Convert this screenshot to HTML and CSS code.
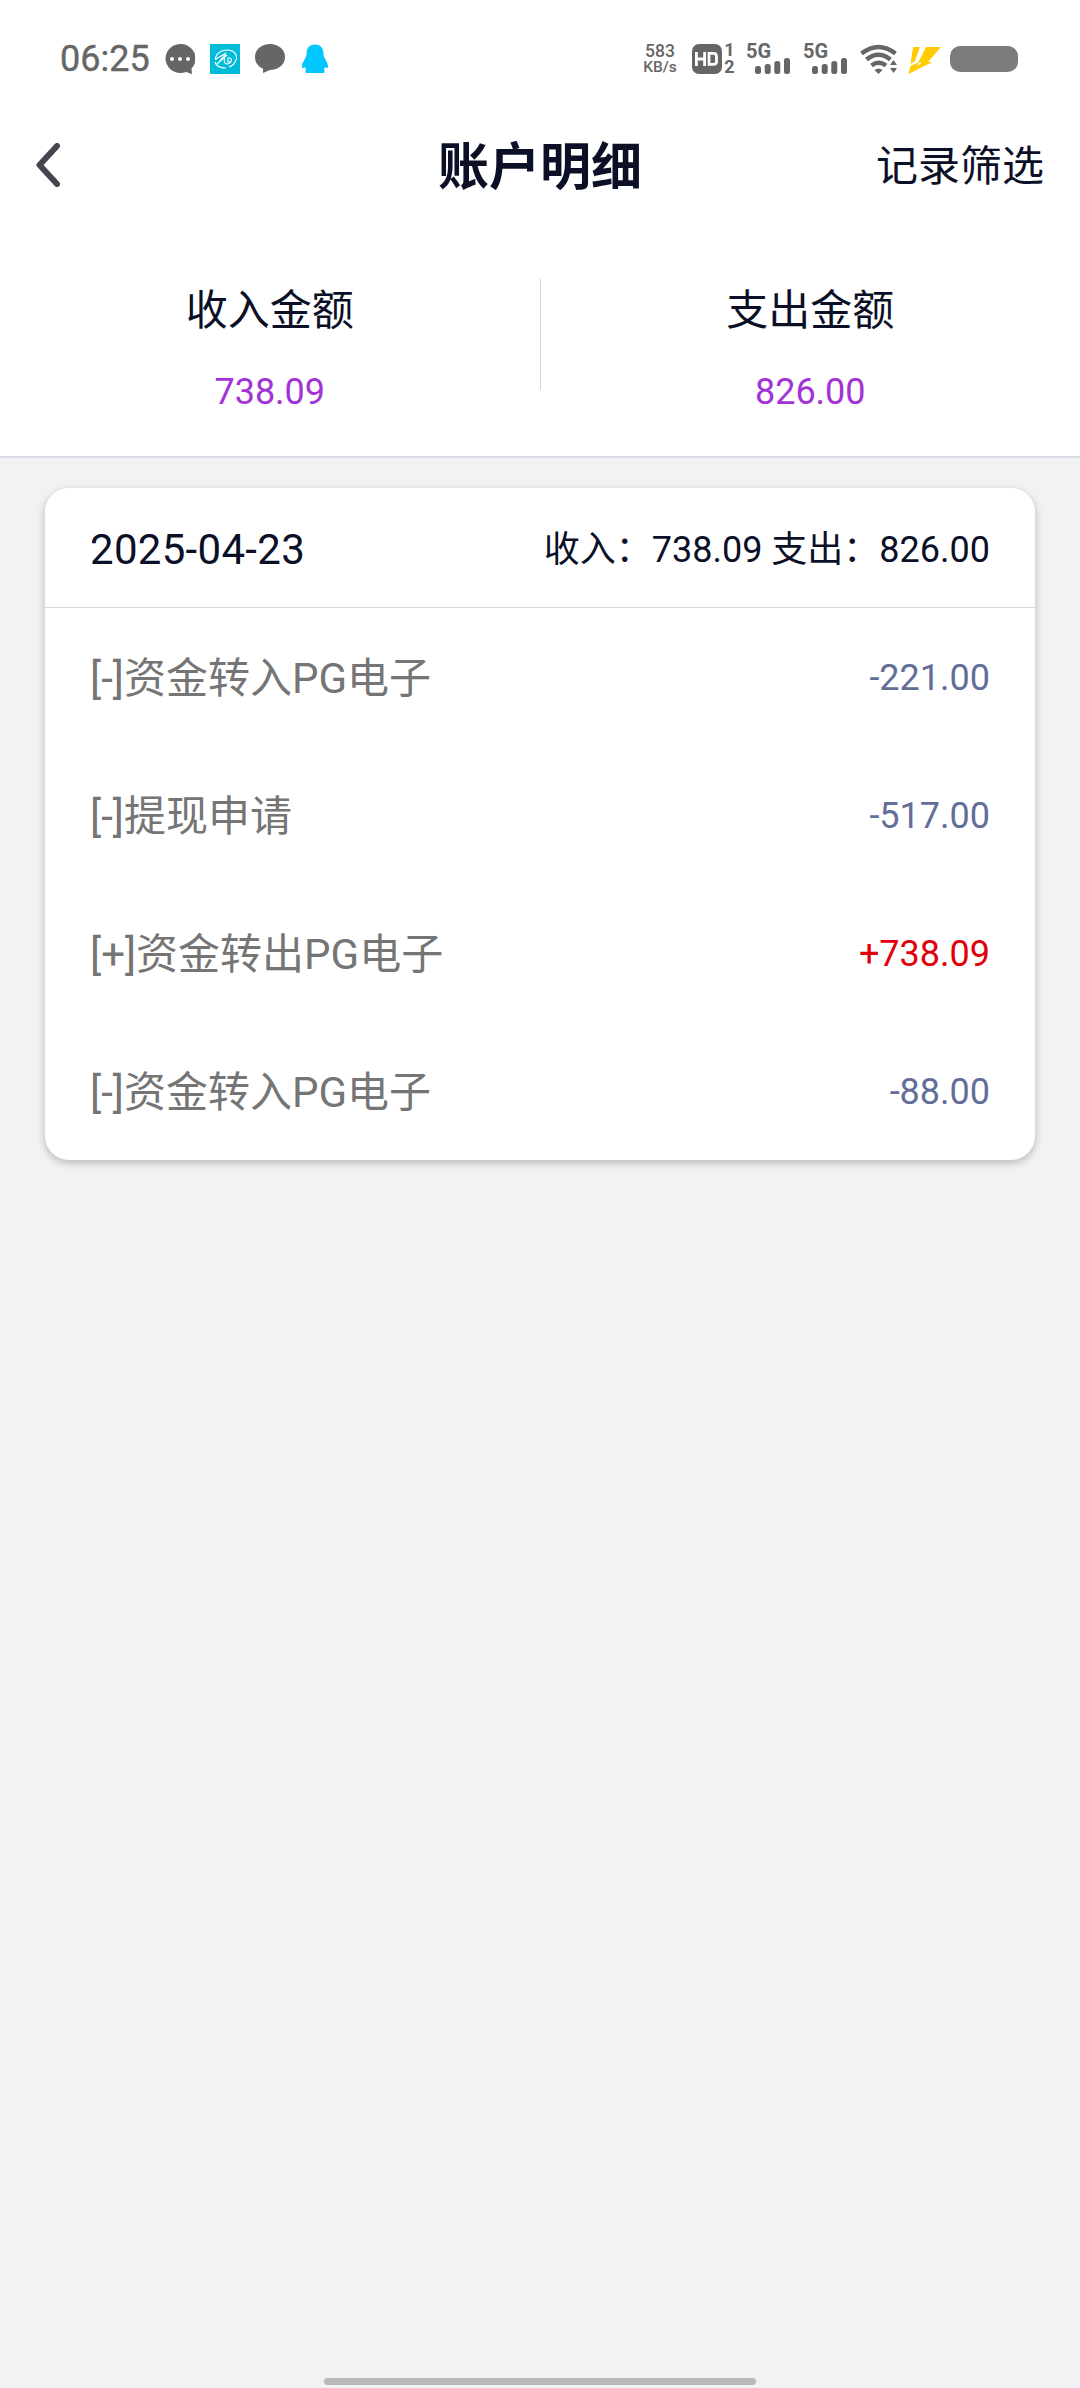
FILE: index.html
```html
<!DOCTYPE html>
<html lang="zh-CN">
<head>
<meta charset="utf-8">
<title>账户明细</title>
<link rel="stylesheet" href="styles.css">
</head>
<body>
<div class="screen">
  <div class="top">
    <div class="status">
      <div class="status-left">
        <span class="time">06:25</span>
        <svg width="30" height="30" viewBox="0 0 30 30"><path fill="#666" d="M15 0a15 14.500 0 0 1 11.500 24.500L27 30l-6-2A15 14.500 0 1 1 15 0z"/><g fill="#fff"><circle cx="7" cy="15" r="2"/><circle cx="15" cy="15" r="2"/><circle cx="23" cy="15" r="2"/></g></svg>
        <svg width="30" height="30" viewBox="0 0 30 30"><path fill="#00bcd9" d="M0 0h30v30H0z"/><g fill="none" stroke="#fff" stroke-width="1.100"><path d="M5.500 16C5 10 11 6 17 6c7 0 11 5 9 10-1 3-4 6-7 7M6 15l10-6-7 9M7 20l10-9M5 18c1 4 5 6 11 6"/><path d="M16 11c-3 4-2 9 1 9 4 0 6-5 3-6h-2v4h3"/></g></svg>
        <svg width="30" height="30" viewBox="0 0 30 30"><path fill="#666" d="M15 0c8.500 0 15 5.500 15 13S23.500 26 15 26l-7 3V24.500C3 22.500 0 18.500 0 13 0 5.500 6.500 0 15 0z"/></svg>
        <svg width="30" height="30" viewBox="0 0 30 30"><path fill="#00c8ff" d="M15 .5c6 0 8.500 4 8.500 9.500 0 4 4.500 8 4.500 12 0 2-1 3-3 1l-1 3c1 1 1 3-1 3H7c-2 0-2-2-1-3l-1-3c-2 2-3 1-3-1 0-4 4.500-8 4.500-12C6.500 4.500 9 .5 15 .5z"/></svg>
      </div>
      <div class="status-right">
        <div class="speed"><span>583</span><span>KB/s</span></div>
        <div class="hd">
          <svg width="30" height="30" viewBox="0 0 30 30"><rect width="30" height="30" rx="7" fill="#666"/><path fill="none" stroke="#fff" stroke-width="2.800" d="M4.400 8v14M12.600 8v14M4.400 15h8.200M17 9.400h4.500q3 0 3 3v5q0 3-3 3H17z"/></svg>
          <div class="sims"><span>1</span><span>2</span></div>
        </div>
        <div class="signal"><span>5G</span><svg width="35" height="16" viewBox="0 0 35 16"><g fill="#666"><rect y="8" width="6" height="8" rx="2.500"/><rect x="9.700" y="6" width="6" height="10" rx="2.500"/><rect x="19.300" y="3" width="6" height="13" rx="2.500"/><rect x="29" width="6" height="16" rx="2.500"/></g></svg></div>
        <div class="signal"><span>5G</span><svg width="35" height="16" viewBox="0 0 35 16"><g fill="#666"><rect y="8" width="6" height="8" rx="2.500"/><rect x="9.700" y="6" width="6" height="10" rx="2.500"/><rect x="19.300" y="3" width="6" height="13" rx="2.500"/><rect x="29" width="6" height="16" rx="2.500"/></g></svg></div>
        <svg class="wifi" width="37" height="30" viewBox="0 0 37 30"><g fill="none" stroke="#666" stroke-width="4.300"><path d="M1.500 9.500Q18.500-3.500 35.500 9.500M6.500 15.500Q18.500 6 30.500 15.500M11.500 21.500Q18.500 16 26 21.500"/></g><path fill="#666" d="M14.500 26q4-3 8 0l-4 4zM33.500 16l3.500 5h-7zM33.500 29l3.500-5h-7z"/></svg>
        <svg class="bolt" width="33" height="27" viewBox="0 0 33 27"><path fill="#fc0" d="M5 0h7L7 14l-4.500 3zM18 0h15L20 15h4.500L.5 27l2-8 9-4-3 4.500 5-3.500-3-1z"/></svg>
        <div class="battery"></div>
      </div>
    </div>
    <div class="nav">
      <svg class="back" width="24" height="44" viewBox="0 0 24 44"><path d="M21 3 3.500 22 21 41" fill="none" stroke="#45454f" stroke-width="6" stroke-linecap="round" stroke-linejoin="round"/></svg>
      <h1>账户明细</h1>
      <span class="filter">记录筛选</span>
    </div>
    <div class="summary">
      <div class="sum"><span class="label">收入金额</span><span class="value">738.09</span></div>
      <div class="divider"></div>
      <div class="sum"><span class="label">支出金额</span><span class="value">826.00</span></div>
    </div>
  </div>
  <div class="card">
    <div class="card-head"><span class="date">2025-04-23</span><span class="totals">收入：738.09 支出：826.00</span></div>
    <div class="row"><span class="name">[-]资金转入PG电子</span><span class="amount">-221.00</span></div>
    <div class="row"><span class="name">[-]提现申请</span><span class="amount">-517.00</span></div>
    <div class="row"><span class="name">[+]资金转出PG电子</span><span class="amount plus">+738.09</span></div>
    <div class="row"><span class="name">[-]资金转入PG电子</span><span class="amount">-88.00</span></div>
  </div>
  <div class="home-bar"></div>
</div>
</body>
</html>
```

FILE: styles.css
```css
* { box-sizing: border-box; margin: 0; }
body { font-family: Roboto, "Noto Sans CJK SC", sans-serif; font-size: 42px; color: #0b1027; background: #f2f2f4; }
svg { display: block; flex: none; }
.screen { width: 1080px; height: 2388px; display: flex; flex-direction: column; overflow: hidden; }
.top { height: 458px; background: #fff; border-bottom: 2px solid #d9dbe7; }
.status { height: 110px; padding: 44px 62px 0 60px; display: flex; justify-content: space-between; color: #666; }
.status-left { display: flex; gap: 15px; height: 30px; align-items: center; }
.time { width: 90px; font-size: 36px; line-height: 30px; -webkit-text-stroke: .4px #666; }
.status-right { display: flex; height: 30px; align-items: flex-start; font-weight: 500; }
.speed { width: 34px; display: flex; flex-direction: column; align-items: center; font-size: 17.5px; line-height: 16px; margin: -1px 15px 0 0; }
.speed span + span { font-size: 15.5px; }
.hd { display: flex; gap: 2px; width: 54px; }
.sims { display: flex; flex-direction: column; width: 11px; align-items: center; font-size: 18px; font-weight: 700; line-height: 17px; margin-top: -3px; }
.signal { width: 57px; height: 30px; font-size: 20px; font-weight: 700; line-height: 14px; display: flex; flex-direction: column; }
.signal svg { margin-left: 9px; }
.wifi { margin-right: 11px; }
.bolt { margin: 3px 9px 0 0; }
.battery { width: 68px; height: 26px; border-radius: 10px; background: #7c7c7c; margin-top: 2px; }
.nav { height: 110px; padding: 0 36px; display: grid; grid-template-columns: 1fr auto 1fr; align-items: center; }
h1 { font-size: 51px; font-weight: 700; line-height: 60px; padding-top: 5px; }
.filter { justify-self: end; line-height: 60px; padding-top: 4px; }
.summary { display: flex; padding-top: 59px; }
.sum { flex: 1; display: flex; flex-direction: column; align-items: center; gap: 27px; padding-top: 2px; }
.label { line-height: 60px; }
.value { font-size: 36px; line-height: 48px; color: #a233d6; }
.divider { width: 1px; height: 111px; background: #cfd6dc; }
.card { margin: 30px 45px 0; height: 672px; background: #fff; border-radius: 24px; box-shadow: 0 3px 8px rgba(0,0,0,.24); }
.card-head { height: 120px; padding: 0 45px; display: flex; align-items: center; justify-content: space-between; border-bottom: 1px solid #d6dadd; }
.date { letter-spacing: .3px; padding-top: 3px; }
.totals { font-size: 36px; padding-bottom: 4px; }
.row { height: 138px; padding: 0 45px; display: flex; align-items: center; justify-content: space-between; color: #757575; }
.name { padding-bottom: 6px; }
.amount { font-size: 36px; color: #626e98; padding-top: 2px; }
.plus { color: #e1000a; }
.home-bar { width: 432px; height: 7px; border-radius: 4px; background: #b8b9ba; margin: auto auto 3px; }
```
